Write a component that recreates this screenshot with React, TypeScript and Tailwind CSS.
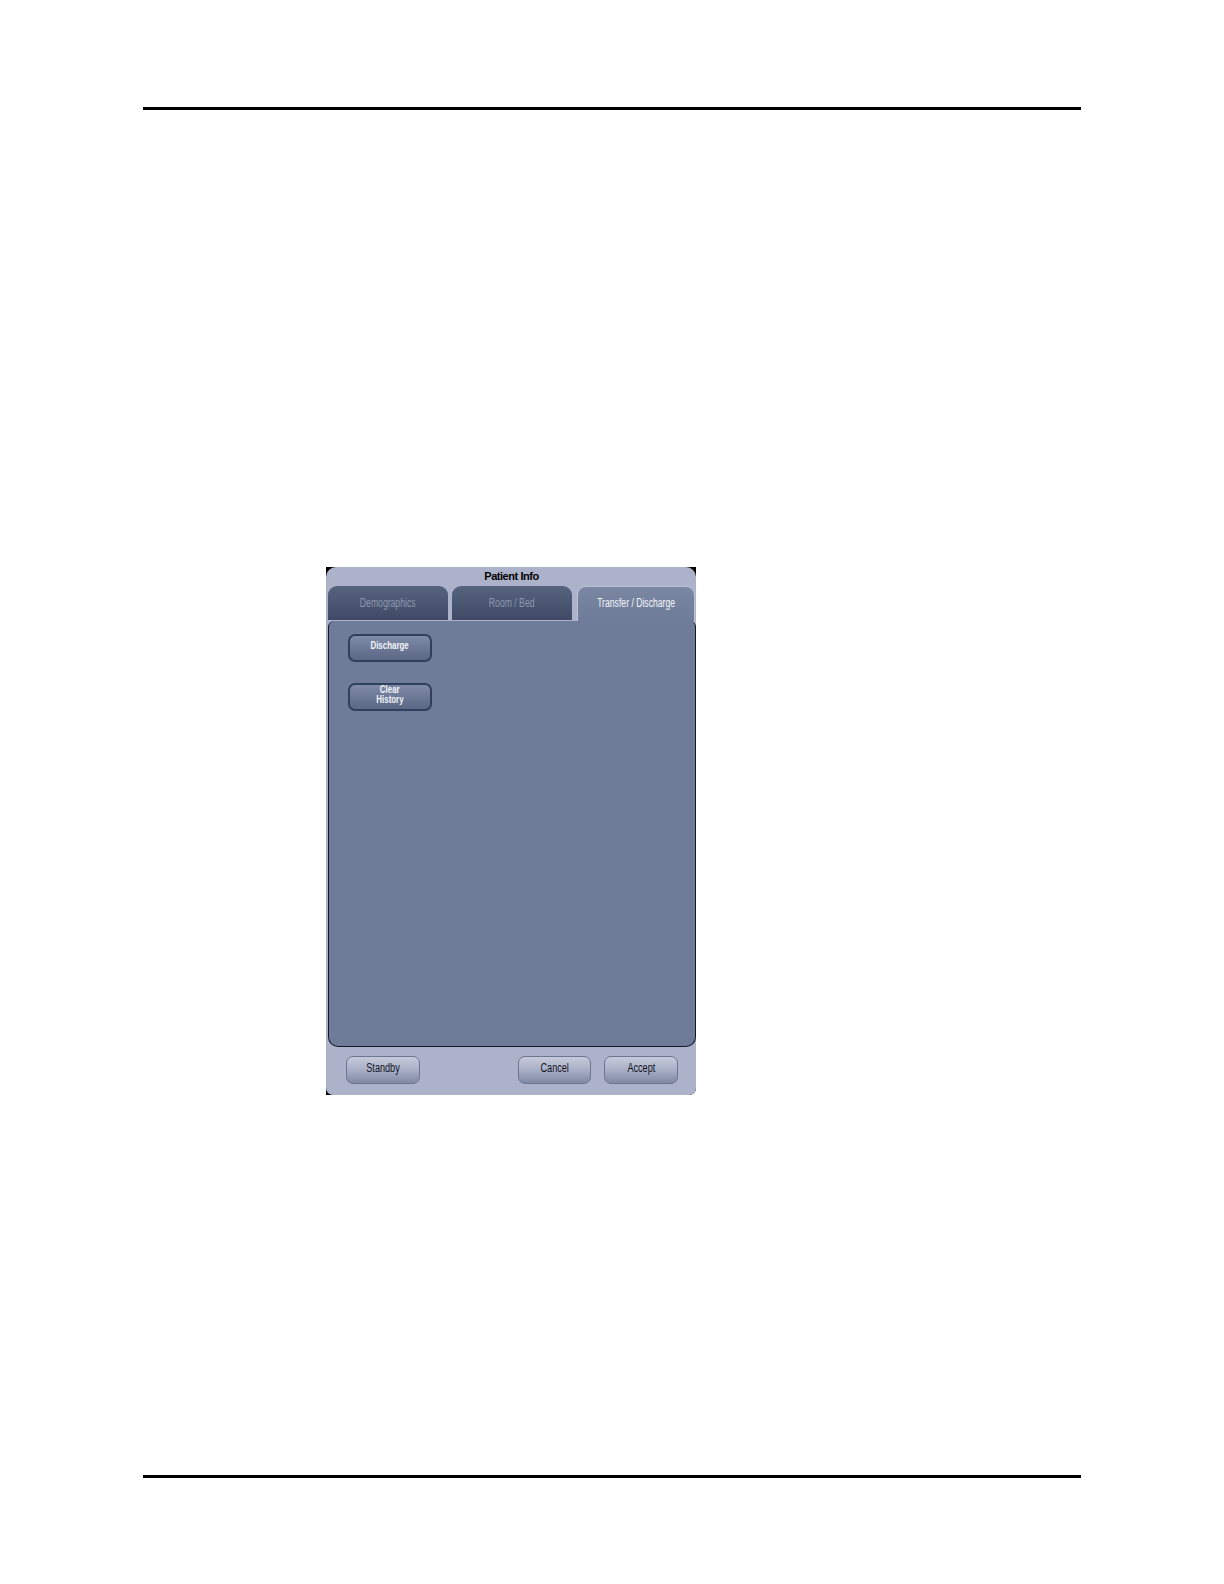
import React from 'react';

const sans = "font-['Liberation_Sans',Arial,sans-serif]";

const Tab = ({ label, width, active }: { label: string; width: string; active?: boolean }) => (
  <div
    className={
      active
        ? `${width} relative z-10 flex h-[35px] items-center justify-center rounded-t-[9px] border-t border-x border-[#bcc2d6] bg-gradient-to-b from-[#7a86a2] to-[#6e7c99] pb-[2px] text-[#f4f6fa]`
        : `${width} flex h-[34px] items-center justify-center rounded-t-[9px] bg-gradient-to-b from-[#56637f] to-[#3f4965] pb-[1px] text-[#8f98ad]`
    }
  >
    <span className="scale-x-[0.72] whitespace-nowrap text-[12px]">{label}</span>
  </div>
);

const DarkButton = ({ children }: { children: React.ReactNode }) => (
  <button className="flex h-[28px] w-[84px] flex-col items-center justify-center rounded-[7px] border-2 border-[#2f3f5c] bg-gradient-to-b from-[#7f8ba8] to-[#5a6785] pb-[7px] text-[11px] font-bold leading-[10px] text-[#f2f4f8]">
    {children}
  </button>
);

const LightButton = ({ label, width }: { label: string; width: string }) => (
  <button className={`${width} flex h-[28px] items-center justify-center rounded-[7px] border border-[#6d7590] bg-gradient-to-b from-[#c6cadb] via-[#a9afc6] to-[#808aa5] pb-[5px] text-[12px] text-[#10141e]`}>
    <span className="scale-x-[0.76] whitespace-nowrap">{label}</span>
  </button>
);

export default function App() {
  return (
    <div className={`${sans} h-[1584px] w-[1224px] bg-white px-[143px] pt-[107px]`}>
      <div className="h-[3px] w-[938px] bg-black" />

      <div className="ml-[183px] mt-[457px] h-[528px] w-[370px] rounded-br-[7px] bg-black">
        <div className="flex h-full flex-col rounded-t-[10px] rounded-b-[7px] bg-[#adb2cb] pl-[2px]">
          <div className="flex h-[19px] w-[367px] items-center justify-center text-[11px] font-bold tracking-[-0.45px] text-black">
            Patient Info
          </div>
          <div className="flex w-[367px] gap-[4px]">
            <Tab label="Demographics" width="w-[120px]" />
            <Tab label="Room / Bed" width="w-[120px]" />
            <div className="ml-[1px]">
              <Tab label="Transfer / Discharge" width="w-[118px]" active />
            </div>
          </div>
          <div className="flex h-[426px] w-[368px] flex-col items-start gap-[21px] rounded-b-[10px] rounded-t-[6px] border border-t-0 border-[#10182a] bg-[#6e7c99] pl-[19px] pt-[13px]">
            <DarkButton>
              <span className="scale-x-[0.72] whitespace-nowrap">Discharge</span>
            </DarkButton>
            <DarkButton>
              <span className="scale-x-[0.72] whitespace-nowrap">Clear</span>
              <span className="scale-x-[0.72] whitespace-nowrap">History</span>
            </DarkButton>
          </div>
          <div className="flex flex-1 items-start pl-[18px] pt-[9px]">
            <LightButton label="Standby" width="w-[74px]" />
            <div className="ml-[98px]">
              <LightButton label="Cancel" width="w-[73px]" />
            </div>
            <div className="ml-[13px]">
              <LightButton label="Accept" width="w-[74px]" />
            </div>
          </div>
        </div>
      </div>

      <div className="mt-[380px] h-[3px] w-[938px] bg-black" />
    </div>
  );
}
